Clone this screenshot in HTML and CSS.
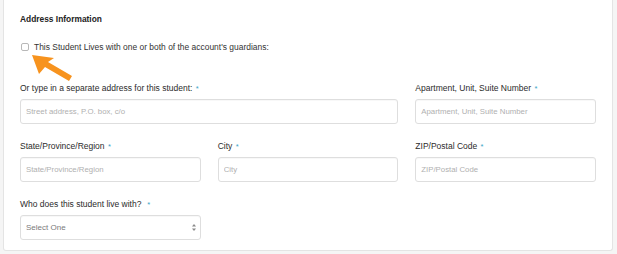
FILE: index.html
```html
<!DOCTYPE html>
<html lang="en">
<head>
    <meta charset="UTF-8">
    <meta name="viewport" content="width=device-width, initial-scale=1.0">
    <title>Address Information</title>
    <link rel="stylesheet" href="styles.css">
</head>
<body>
    <div class="card">
        <h3 class="section-title">Address Information</h3>
        <label class="check-row">
            <input type="checkbox" class="check">
            <span>This Student Lives with one or both of the account's guardians:</span>
        </label>
        <svg class="pointer" width="50" height="34" viewBox="0 0 50 34">
            <polygon points="0,0 22,3 16,7 40,21 37,26 13,12 7,19" fill="#f7931e"/>
        </svg>
        <div class="fields">
            <div class="field span-2">
                <label>Or type in a separate address for this student: <span class="req">*</span></label>
                <input type="text" placeholder="Street address, P.O. box, c/o">
            </div>
            <div class="field">
                <label>Apartment, Unit, Suite Number <span class="req">*</span></label>
                <input type="text" placeholder="Apartment, Unit, Suite Number">
            </div>
            <div class="field">
                <label>State/Province/Region <span class="req">*</span></label>
                <input type="text" placeholder="State/Province/Region">
            </div>
            <div class="field">
                <label>City <span class="req">*</span></label>
                <input type="text" placeholder="City">
            </div>
            <div class="field">
                <label>ZIP/Postal Code <span class="req">*</span></label>
                <input type="text" placeholder="ZIP/Postal Code">
            </div>
            <div class="field">
                <label>Who does this student live with? &nbsp;<span class="req">*</span></label>
                <div class="select-wrap">
                    <select>
                        <option>Select One</option>
                    </select>
                    <svg class="select-arrows" width="4" height="7" viewBox="0 0 4 7">
                        <polygon points="2,0 4,2.6 0,2.6" fill="#8a8a8a"/>
                        <polygon points="0,4.4 4,4.4 2,7" fill="#8a8a8a"/>
                    </svg>
                </div>
            </div>
        </div>
    </div>
</body>
</html>
```

FILE: styles.css
```css
body {
    margin: 0;
    background: #f5f5f5;
    font-family: 'Liberation Sans', Arial, sans-serif;
    color: #333;
}

.card {
    position: relative;
    margin: 0 4px 3px 3px;
    padding: 13px 16px;
    background: #fff;
    border: 1px solid #e4e4e4;
    border-top: none;
    border-radius: 0 0 3px 3px;
    box-sizing: border-box;
    height: 251px;
}

.section-title {
    margin: 0;
    font-size: 8.4px;
    line-height: 12px;
    font-weight: bold;
    color: #222;
}

.check-row {
    display: flex;
    align-items: center;
    gap: 5px;
    margin-top: 16px;
    height: 12px;
    font-size: 8.45px;
    color: #333;
}

.check {
    appearance: none;
    margin: 0 0 0 1px;
    width: 8px;
    height: 8px;
    border: 1px solid #b8b8b8;
    border-radius: 2px;
    background: #fff;
}

.pointer {
    position: absolute;
    left: 28px;
    top: 55px;
}

.fields {
    display: grid;
    grid-template-columns: 1fr 1fr 1fr;
    column-gap: 17px;
    row-gap: 16px;
    margin-top: 29px;
}

.span-2 {
    grid-column: span 2;
}

.field label {
    display: block;
    font-size: 8.5px;
    line-height: 12px;
    margin-bottom: 4px;
    color: #2b2b2b;
}

.req {
    color: #3ba4c8;
    font-size: 7.5px;
    margin-left: 1px;
}

.field input,
.field select {
    display: block;
    width: 100%;
    height: 25px;
    box-sizing: border-box;
    padding: 0 5px;
    border: 1px solid #dedede;
    border-radius: 3px;
    background: #fff;
    box-shadow: inset 0 1px 1px rgba(0, 0, 0, 0.03);
    font-family: 'Liberation Sans', Arial, sans-serif;
    font-size: 7.8px;
    color: #777;
    outline: none;
}

.field input::placeholder {
    color: #b0b0b0;
}

.select-wrap {
    position: relative;
}

.field select {
    appearance: none;
    color: #7a7a7a;
    font-size: 8px;
}

.select-arrows {
    position: absolute;
    right: 5px;
    top: 9px;
}
```
